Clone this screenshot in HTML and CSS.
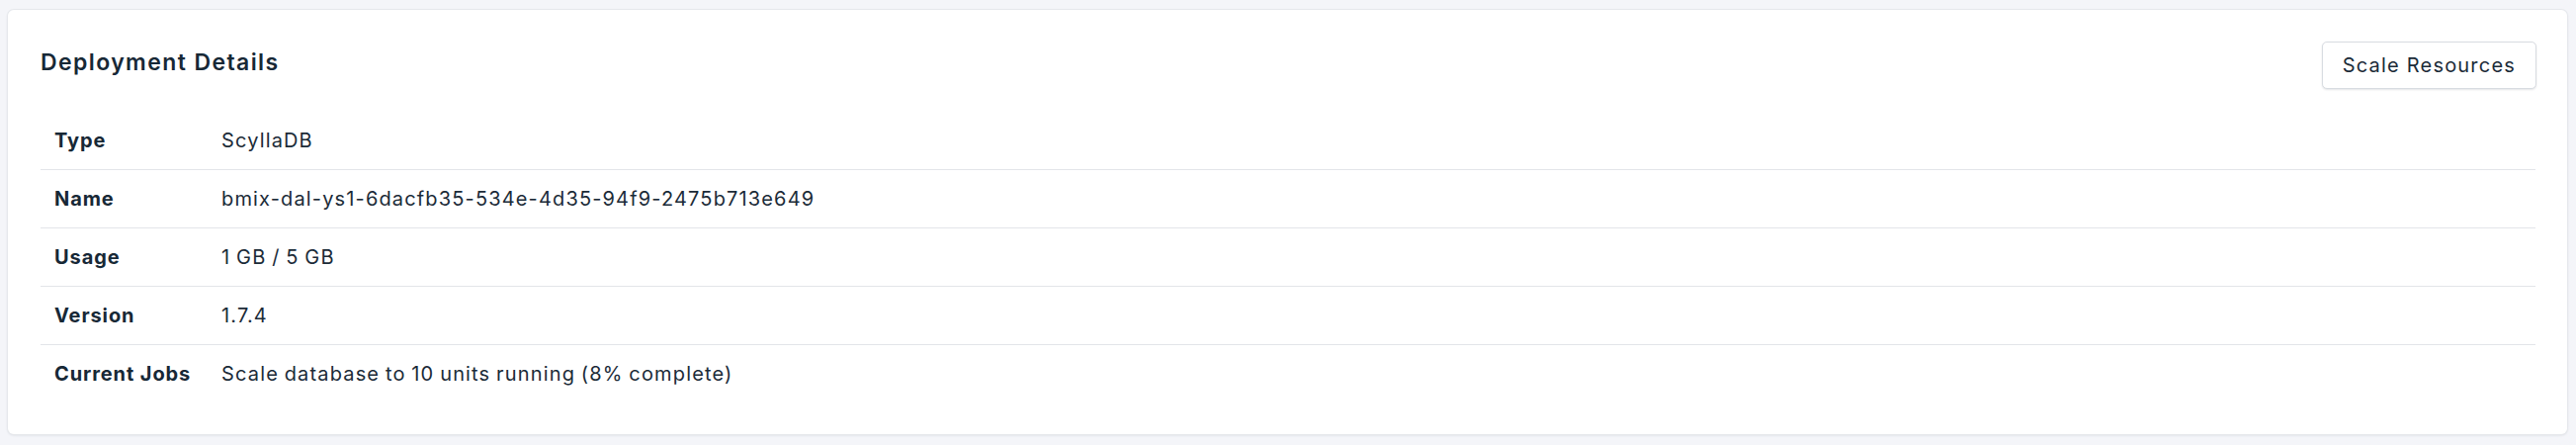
FILE: index.html
```html
<!DOCTYPE html>
<html>
<head>
<meta charset="utf-8">
<link rel="stylesheet" href="styles.css">
</head>
<body>
<section class="card">
  <div class="card-header">
    <h2 class="title">Deployment Details</h2>
    <button class="btn">Scale Resources</button>
  </div>
  <div class="details">
    <div class="row"><div class="label">Type</div><div class="value">ScyllaDB</div></div>
    <div class="row"><div class="label">Name</div><div class="value">bmix-dal-ys1-6dacfb35-534e-4d35-94f9-2475b713e649</div></div>
    <div class="row"><div class="label">Usage</div><div class="value">1 GB / 5 GB</div></div>
    <div class="row"><div class="label">Version</div><div class="value">1.7.4</div></div>
    <div class="row"><div class="label">Current Jobs</div><div class="value">Scale database to 10 units running (8% complete)</div></div>
  </div>
</section>
</body>
</html>
```
FILE: styles.css
```css
html, body {
  margin: 0;
  padding: 0;
  background: #f4f5f9;
}
body {
  padding: 10px 9px 8px 8px;
  font-family: Inter, "Noto Sans", sans-serif;
  color: #1b2b38;
}
.card {
  background: #fff;
  border-radius: 6px;
  box-shadow: 0 0 0 1px #e6e8ec, 0 1px 3px rgba(30, 40, 60, 0.14);
  padding: 32px 32px 32px 33px;
}
.card-header {
  display: flex;
  justify-content: space-between;
  align-items: flex-start;
  margin-bottom: 23px;
}
.title {
  margin: 0;
  padding-top: 5px;
  font-size: 23px;
  line-height: 32px;
  font-weight: 600;
  letter-spacing: 1.4px;
  color: #172836;
}
.btn {
  font-family: inherit;
  font-size: 20px;
  letter-spacing: 1.2px;
  color: #1b2b38;
  background: #fff;
  border: 1px solid #d8dce1;
  border-radius: 5px;
  box-shadow: 0 1px 2px rgba(30, 40, 60, 0.12);
  height: 48px;
  padding: 0 20px;
  margin-right: -1px;
}
.details {
  display: flex;
  flex-direction: column;
}
.row {
  display: grid;
  grid-template-columns: 183px 1fr;
  align-items: center;
  height: 58px;
  border-bottom: 1px solid #e3e5e9;
  font-size: 20px;
}
.row:last-child {
  border-bottom: none;
}
.label {
  padding-left: 14px;
  font-weight: 700;
  letter-spacing: 0.9px;
  color: #172836;
}
.value {
  letter-spacing: 1.15px;
  word-spacing: -1px;
}
```
